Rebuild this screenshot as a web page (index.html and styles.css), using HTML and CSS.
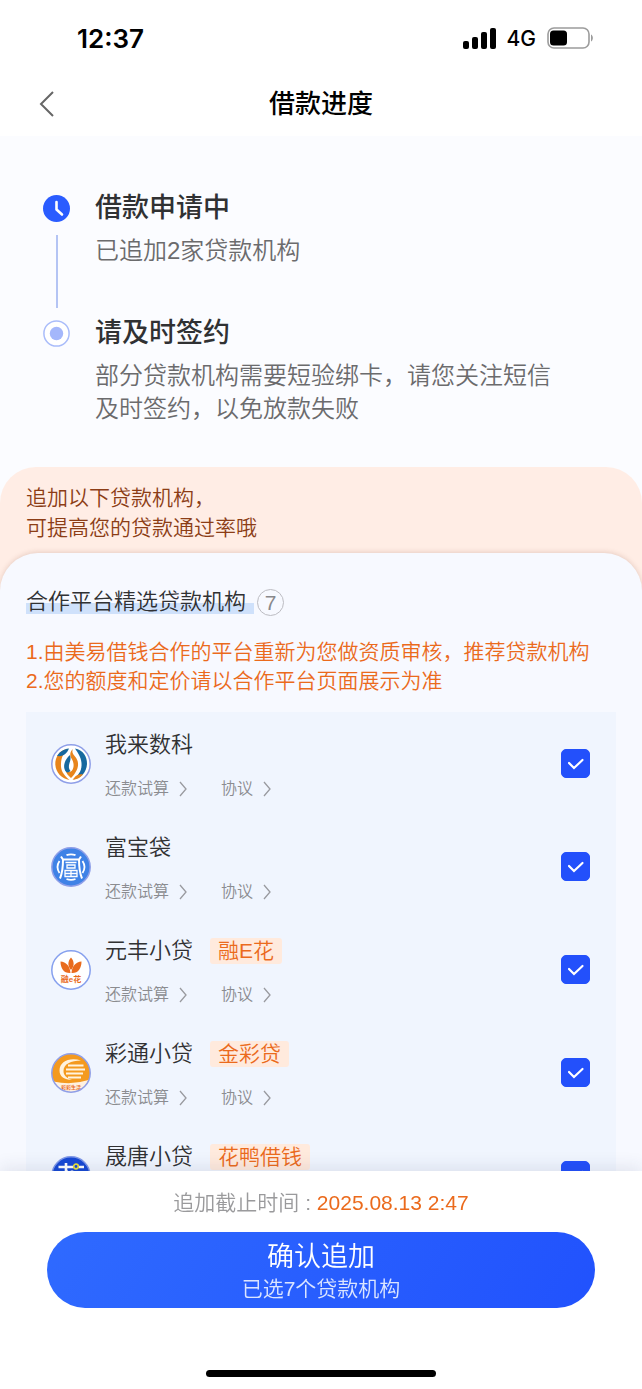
FILE: index.html
```html
<!DOCTYPE html>
<html lang="zh-CN">
<head>
  <meta charset="UTF-8">
  <meta name="viewport" content="width=device-width, initial-scale=1">
  <title>借款进度</title>
  <link rel="stylesheet" href="styles.css">
</head>
<body>
  <div class="status-bar">
    <span class="time">12:37</span>
    <div class="status-icons">
      <svg width="33" height="21" viewBox="0 0 33 21">
        <rect x="0" y="13" width="6" height="8" rx="2"/>
        <rect x="9" y="9" width="6" height="12" rx="2"/>
        <rect x="18" y="4" width="6" height="17" rx="2"/>
        <rect x="27" y="0" width="6" height="21" rx="2"/>
      </svg>
      <span class="network">4G</span>
      <svg width="46" height="22" viewBox="0 0 46 22">
        <rect x="1" y="1" width="41" height="20" rx="6" fill="#fff" stroke="#9c9c9c" stroke-width="1.6"/>
        <rect x="3" y="3.5" width="17" height="15" rx="3.5"/>
        <path d="M44 7.5c2.5 1.2 2.5 5.8 0 7z" fill="#9c9c9c"/>
      </svg>
    </div>
  </div>

  <header class="header">
    <button type="button" class="back" aria-label="返回">
      <svg width="16" height="28" viewBox="0 0 16 28"><path d="M14 2L2 14l12 12" fill="none" stroke="#666" stroke-width="2"/></svg>
    </button>
    <h1>借款进度</h1>
  </header>

  <main class="content">
    <ol class="steps">
      <li class="step">
        <div class="marker">
          <svg width="27" height="27" viewBox="0 0 27 27">
            <circle cx="13.5" cy="13.5" r="13.5" fill="#2a5cff"/>
            <path d="M13.5 7v7.5l5.5 5" fill="none" stroke="#fff" stroke-width="2.6" stroke-linecap="round" stroke-linejoin="round"/>
          </svg>
          <span class="line"></span>
        </div>
        <div class="step-text">
          <h2>借款申请中</h2>
          <p>已追加2家贷款机构</p>
        </div>
      </li>
      <li class="step">
        <div class="marker">
          <svg width="27" height="27" viewBox="0 0 27 27">
            <circle cx="13.5" cy="13.5" r="12.6" fill="#fff" stroke="#a9bcfa" stroke-width="1.5"/>
            <circle cx="13.5" cy="13.5" r="6.7" fill="#a4b7fb"/>
          </svg>
        </div>
        <div class="step-text">
          <h2>请及时签约</h2>
          <p>部分贷款机构需要短验绑卡，请您关注短信及时签约，以免放款失败</p>
        </div>
      </li>
    </ol>

    <section class="banner">
      <p class="banner-text">追加以下贷款机构，<br>可提高您的贷款通过率哦</p>

      <div class="panel">
        <h3 class="panel-title"><span class="marked">合作平台精选贷款机构</span><span class="count">7</span></h3>
        <p class="notice">1.由美易借钱合作的平台重新为您做资质审核，推荐贷款机构<br>2.您的额度和定价请以合作平台页面展示为准</p>

        <ul class="list">
          <li class="row">
            <svg class="logo" viewBox="0 0 40 40">
              <circle cx="20" cy="20" r="19.2" fill="#fff" stroke="#8f9fe8" stroke-width="1.5"/>
              <path d="M16 5C8.500 6.500 4 13 4.300 20.500 4.800 29 11 34.500 18.500 36 12 30.500 9.500 26 10 19.500 10.300 13 13 9 16 5z" fill="#e8851c"/>
              <path d="M18 4.500C12 5 8 8.500 6 12c3 .5 5.500-.2 7.500-1.500 2-1.500 3.500-3.500 4.500-6z" fill="#17699f"/>
              <path d="M24 4.500c8 1.500 12.300 8 12 15.500-.5 8.500-6 14-13.500 15.500 6.300-5.500 8.500-10 8-16.500-.5-6-3.500-10-6.500-14.500z" fill="#17699f"/>
              <path d="M21.500 35.700c4.500-.2 8-2.200 10.500-5.200-3-.7-5.500.2-7.500 1.700z" fill="#e8851c"/>
              <path d="M22 5c-1.500 3 0 5 2 7.500 3.500 4 4 9 1.500 14-1.500 3-3 5-5.500 7.500-2.500-2-5-5-5.500-8 2.500 2.500 5 2.500 6.500.5 2.500-3.500 2-8-.5-12-2-3.500-1.500-7 1.500-9.500z" fill="#e8851c"/>
              <path d="M19 11c-5.500 5-6.500 10-5.500 14 1 3.500 3.500 4.500 6 2-2-2-2-5-1-8 1-2.500 1.500-5 .5-8z" fill="#17699f"/>
              <path d="M20.500 17c1.500 3 1.500 6 0 8-1.500-2-1.500-5 0-8z" fill="#fff"/>
            </svg>
            <div class="info">
              <div class="name">我来数科</div>
              <div class="links">
                <a href="#">还款试算<svg width="8" height="16" viewBox="0 0 8 16"><path d="M1 1l6 7-6 7"/></svg></a>
                <a href="#">协议<svg width="8" height="16" viewBox="0 0 8 16"><path d="M1 1l6 7-6 7"/></svg></a>
              </div>
            </div>
            <input type="checkbox" class="check" aria-label="我来数科" checked>
          </li>

          <li class="row">
            <svg class="logo" viewBox="0 0 40 40">
              <circle cx="20" cy="20" r="19.2" fill="#3f82e6" stroke="#8f9fe8" stroke-width="1.5"/>
              <g fill="none" stroke="#fff">
                <path d="M15.5 8.200q4.500-1.800 9 0M15.500 32q4.500 1.800 9 0M8.500 14q-4 6 0 12M31.500 14q4 6 0 12" stroke-width="1.8"/>
                <path d="M10 9.500l2 3h16l2-3M12 12.500c0 8-.5 13-3 19M28 12.500c0 8 .5 13 3 19" stroke-width="2"/>
                <path d="M14.500 15.500h11M16 18h8v3h-8zM14 23.500h12v6H14zM20 23.500v6M14 26.500h12" stroke-width="1.300"/>
              </g>
            </svg>
            <div class="info">
              <div class="name">富宝袋</div>
              <div class="links">
                <a href="#">还款试算<svg width="8" height="16" viewBox="0 0 8 16"><path d="M1 1l6 7-6 7"/></svg></a>
                <a href="#">协议<svg width="8" height="16" viewBox="0 0 8 16"><path d="M1 1l6 7-6 7"/></svg></a>
              </div>
            </div>
            <input type="checkbox" class="check" aria-label="富宝袋" checked>
          </li>

          <li class="row">
            <svg class="logo" viewBox="0 0 40 40">
              <circle cx="20" cy="20" r="19.2" fill="#fff" stroke="#86a0ee" stroke-width="1.5"/>
              <path d="M20 7.500c3.500 4 3.500 8.500 0 12.500-3.500-4-3.500-8.500 0-12.500z" fill="#e96b1d"/>
              <path d="M9.500 11.500c5.500.3 9.500 4.500 10 11.500-6.500.5-10-4.500-10-11.500zM30.500 11.500c-5.500.3-9.500 4.500-10 11.500 6.500.5 10-4.500 10-11.500z" fill="#e96b1d"/>
              <text x="20" y="32" text-anchor="middle" class="logo-text">融e花</text>
            </svg>
            <div class="info">
              <div class="name">元丰小贷<span class="tag">融E花</span></div>
              <div class="links">
                <a href="#">还款试算<svg width="8" height="16" viewBox="0 0 8 16"><path d="M1 1l6 7-6 7"/></svg></a>
                <a href="#">协议<svg width="8" height="16" viewBox="0 0 8 16"><path d="M1 1l6 7-6 7"/></svg></a>
              </div>
            </div>
            <input type="checkbox" class="check" aria-label="元丰小贷" checked>
          </li>

          <li class="row">
            <svg class="logo" viewBox="0 0 40 40">
              <circle cx="20" cy="20" r="19.2" fill="#f49a1f"/>
              <path d="M2.500 28.500q18 4 35-1.500a19 19 0 0 1-35 1.500z" fill="#fff1e0"/>
              <path d="M30 7.500C18 4 8.500 9 8.500 17.500c0 6 5 9.500 12.500 9.500-6-2-8.500-5-8.500-9C12.500 11 20 7.500 30 7.500z" fill="#fff3df"/>
              <path d="M17 12.500h15.500M15 16.500h19M15 20.500h17M17 24.500h13" fill="none" stroke="#fff3df" stroke-width="2.2"/>
              <text x="20" y="36" text-anchor="middle" class="logo-text small">彩彩生活</text>
              <circle cx="20" cy="20" r="19.2" fill="none" stroke="#8f9fe8" stroke-width="1.5"/>
            </svg>
            <div class="info">
              <div class="name">彩通小贷<span class="tag">金彩贷</span></div>
              <div class="links">
                <a href="#">还款试算<svg width="8" height="16" viewBox="0 0 8 16"><path d="M1 1l6 7-6 7"/></svg></a>
                <a href="#">协议<svg width="8" height="16" viewBox="0 0 8 16"><path d="M1 1l6 7-6 7"/></svg></a>
              </div>
            </div>
            <input type="checkbox" class="check" aria-label="彩通小贷" checked>
          </li>

          <li class="row">
            <svg class="logo" viewBox="0 0 40 40">
              <circle cx="20" cy="20" r="19.2" fill="#1749d4" stroke="#7f98e8" stroke-width="1.5"/>
              <path d="M7.500 11h14.500M28 11h5M15 7v9M16 14l-6 8M14 18v13M21 14.500v13.500q0 3 3 3h7M31 17l-9 6" fill="none" stroke="#fff" stroke-width="2.6"/>
              <circle cx="25" cy="10.5" r="2.3" fill="#1749d4" stroke="#e9e13c" stroke-width="1.7"/>
            </svg>
            <div class="info">
              <div class="name">晟唐小贷<span class="tag">花鸭借钱</span></div>
              <div class="links">
                <a href="#">还款试算<svg width="8" height="16" viewBox="0 0 8 16"><path d="M1 1l6 7-6 7"/></svg></a>
                <a href="#">协议<svg width="8" height="16" viewBox="0 0 8 16"><path d="M1 1l6 7-6 7"/></svg></a>
              </div>
            </div>
            <input type="checkbox" class="check" aria-label="晟唐小贷" checked>
          </li>
        </ul>
      </div>
    </section>
  </main>

  <footer class="footer">
    <p class="deadline">追加截止时间 : <span>2025.08.13 2:47</span></p>
    <button type="button" class="confirm">
      <span class="confirm-title">确认追加</span>
      <span class="confirm-sub">已选7个贷款机构</span>
    </button>
    <div class="home-bar"></div>
  </footer>
</body>
</html>
```
FILE: styles.css
```css
* {
  box-sizing: border-box;
  margin: 0;
  padding: 0;
}

body {
  height: 100vh;
  display: flex;
  flex-direction: column;
  overflow: hidden;
  background: #fff;
  color: #303133;
  font-family: "Liberation Sans", "Noto Sans CJK SC", sans-serif;
  font-weight: 350;
}

ol, ul {
  list-style: none;
}

a {
  color: inherit;
  text-decoration: none;
}

button {
  border: none;
  background: none;
  font-family: inherit;
  font-weight: inherit;
  cursor: pointer;
}

/* status bar */
.status-bar {
  display: flex;
  justify-content: space-between;
  align-items: center;
  height: 72px;
  padding: 4px 49px 0 77px;
  color: #000;
  font-family: Inter, sans-serif;
}

.time {
  font-size: 26px;
  font-weight: 600;
}

.status-icons {
  display: flex;
  align-items: center;
  gap: 11px;
}

.network {
  font-size: 21px;
  font-weight: 500;
}

/* header */
.header {
  display: grid;
  grid-template-columns: 60px 1fr 60px;
  align-items: center;
  height: 64px;
}

.back {
  display: flex;
  justify-content: flex-end;
  padding-right: 5px;
}

.header h1 {
  color: #000;
  font-size: 26px;
  font-weight: 500;
  line-height: 36px;
  text-align: center;
}

/* content */
.content {
  flex: 1;
  min-height: 0;
  overflow-y: auto;
  scrollbar-width: none;
  background: #fbfcff;
}

.steps {
  padding: 54px 80px 42px 43px;
}

.step {
  display: flex;
  gap: 25px;
}

.step:first-child .step-text {
  padding-bottom: 48px;
}

.marker {
  display: flex;
  flex-direction: column;
  align-items: center;
  flex-shrink: 0;
  gap: 13px;
  padding: 5px 0 7px;
}

.line {
  flex: 1;
  width: 2px;
  background: #b4c4f4;
}

.step h2 {
  font-size: 27px;
  font-weight: 500;
  line-height: 36px;
}

.step p {
  margin-top: 8px;
  color: #6b6b6d;
  font-size: 24px;
  line-height: 33px;
}

.banner {
  border-radius: 36px 36px 0 0;
  background: #ffede5;
}

.banner-text {
  padding: 16px 26px 10px;
  color: #8c3d16;
  font-size: 21px;
  line-height: 30px;
}

.panel {
  padding: 32px 26px 0;
  border-radius: 38px 38px 0 0;
  background: #f7f9ff;
  box-shadow: 0 -1px 5px rgba(120, 60, 40, 0.18);
}

.panel-title {
  display: flex;
  align-items: center;
  gap: 3px;
  font-size: 22px;
  font-weight: inherit;
  line-height: 34px;
}

.marked {
  padding-right: 8px;
  background: linear-gradient(#cfe1fb, #cfe1fb) 0 18px / 100% 11px no-repeat;
}

.count {
  width: 27px;
  height: 27px;
  border: 1px solid #bcbcc2;
  border-radius: 50%;
  color: #88888c;
  font-size: 21px;
  line-height: 25px;
  text-align: center;
}

.notice {
  margin: 18px 0 17px;
  color: #eb6a1c;
  font-size: 21px;
  line-height: 29px;
}

.list {
  background: #f0f5fe;
}

.row {
  display: flex;
  align-items: center;
  gap: 14px;
  padding: 16px 26px 16px 25px;
}

.logo {
  width: 40px;
  height: 40px;
}

.logo-text {
  fill: #e96b1d;
  font-size: 8px;
  font-weight: 700;
}

.logo-text.small {
  font-size: 5px;
}

.info {
  flex: 1;
}

.name {
  display: flex;
  align-items: center;
  gap: 17px;
  font-size: 22px;
  line-height: 34px;
}

.tag {
  padding: 0 8px;
  border-radius: 3px;
  background: #ffeadd;
  color: #eb6a1c;
  font-size: 21px;
  line-height: 26px;
}

.links {
  display: flex;
  gap: 34px;
  margin-top: 17px;
  color: #8b8c90;
  font-size: 16px;
  line-height: 20px;
}

.links a {
  display: flex;
  align-items: center;
  gap: 10px;
}

.links path {
  fill: none;
  stroke: #999a9f;
  stroke-width: 1.3;
}

.check {
  appearance: none;
  width: 29px;
  height: 29px;
  border: 1px solid #2350fb;
  border-radius: 5px;
}

.check:checked {
  background: #2350fb url("data:image/svg+xml,%3Csvg xmlns='http://www.w3.org/2000/svg' viewBox='0 0 27 27'%3E%3Cpath d='M7 13l5 5 8.5-8' fill='none' stroke='white' stroke-width='2.2' stroke-linecap='round'/%3E%3C/svg%3E") center / 27px no-repeat;
}

/* bottom action area */
.footer {
  position: relative;
  display: flex;
  flex-direction: column;
  align-items: center;
  padding: 17px 47px 12px;
  background: #fff;
  box-shadow: 0 -4px 16px rgba(40, 50, 90, 0.1);
}

.deadline {
  color: #9a9a9c;
  font-size: 21px;
  line-height: 30px;
}

.deadline span {
  color: #eb6a1c;
}

.confirm {
  display: flex;
  flex-direction: column;
  align-items: center;
  width: 100%;
  margin: 14px 0 62px;
  padding: 8px 0 4px;
  border-radius: 38px;
  background: linear-gradient(120deg, #2f6aff, #2152fd);
  color: #fff;
}

.confirm-title {
  font-size: 27px;
  line-height: 34px;
}

.confirm-sub {
  color: #dbe5ff;
  font-size: 21px;
  line-height: 30px;
}

.home-bar {
  width: 230px;
  height: 7px;
  border-radius: 4px;
  background: #000;
}
```
